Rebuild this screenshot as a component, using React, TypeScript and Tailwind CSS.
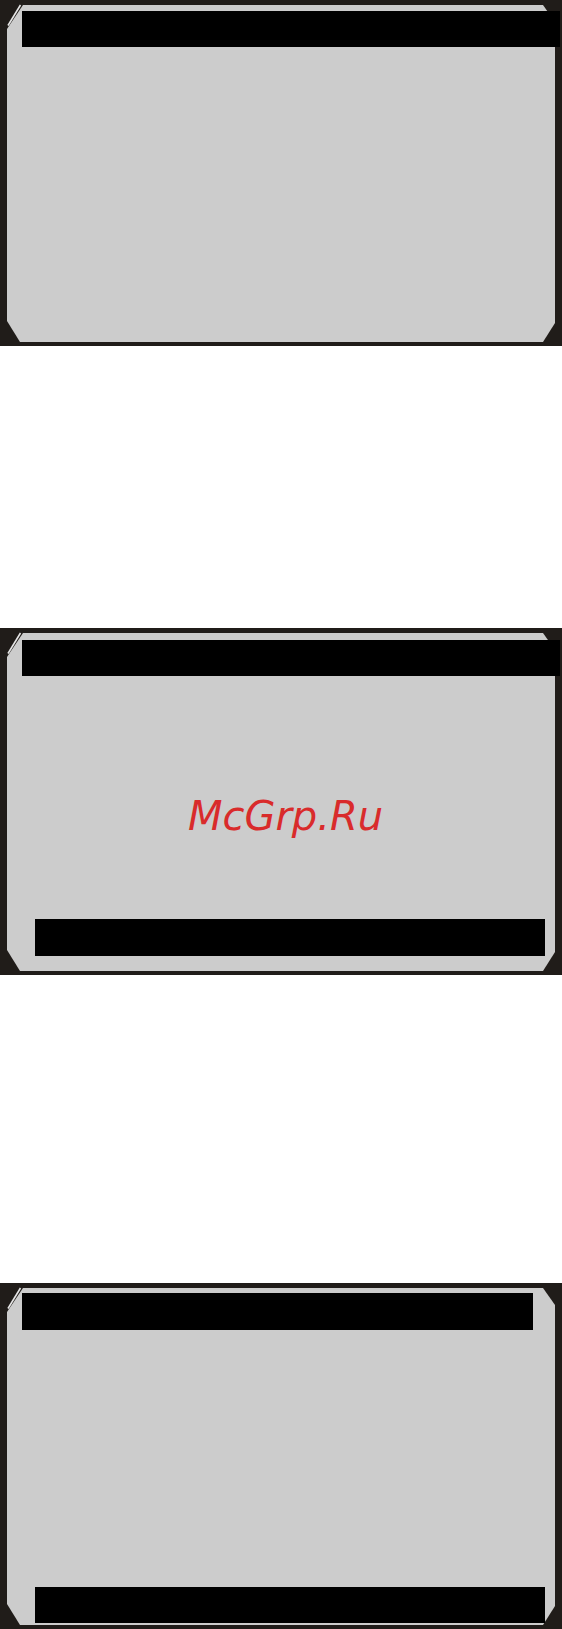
import type { ReactNode } from 'react';

// Bezel frame: dark outer, grey screen with cut corners.
function Screen({ children, className = '' }: { children: ReactNode; className?: string }) {
  return (
    <div className={`relative h-[346px] w-full bg-[#201c19] ${className}`}>
      <div className="absolute inset-x-[7px] top-[5px] bottom-[4px] bg-[#cccccc] [clip-path:polygon(16px_0,536px_0,548px_17px,548px_calc(100%-19px),536px_100%,13px_100%,0_calc(100%-21px),0_24px)]" />
      <svg className="absolute left-0 top-0" width="26" height="32" viewBox="0 0 26 32">
        <line x1="8" y1="25.5" x2="20.5" y2="5" stroke="#e6e6e6" strokeWidth="1.6" />
      </svg>
      <div className="relative flex h-full flex-col">{children}</div>
    </div>
  );
}

export default function App() {
  return (
    <div className="flex min-h-[1629px] w-[562px] flex-col bg-white">
      <Screen>
        <div className="ml-[22px] mr-[2px] mt-[11px] h-[36px] bg-black" />
      </Screen>

      <Screen className="mt-[282px] h-[347px]">
        <div className="ml-[22px] mr-[2px] mt-[12px] h-[36px] bg-black" />
        <div className="flex flex-1 justify-center pl-[9px] pt-[117px]">
          <span className="font-['DejaVu_Sans',sans-serif] text-[40px] italic leading-[normal] text-[#d92b2b]">
            McGrp.Ru
          </span>
        </div>
        <div className="mb-[19px] ml-[35px] mr-[17px] h-[37px] bg-black" />
      </Screen>

      <Screen className="mt-[308px]">
        <div className="ml-[22px] mr-[29px] mt-[10px] h-[37px] bg-black" />
        <div className="flex-1" />
        <div className="mb-[6px] ml-[35px] mr-[17px] h-[36px] bg-black" />
      </Screen>
    </div>
  );
}
